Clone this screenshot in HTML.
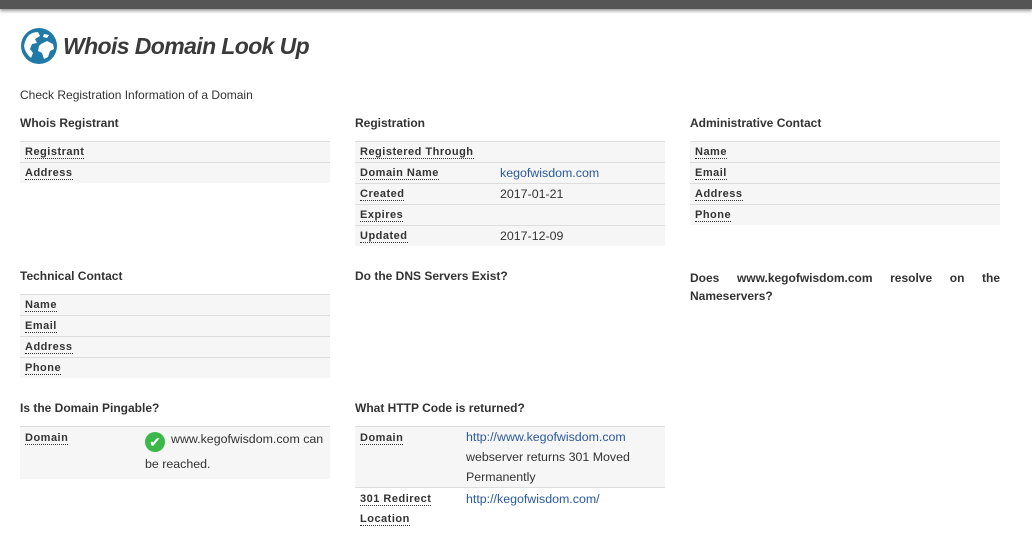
<!DOCTYPE html>
<html><head><meta charset="utf-8"><style>
body{margin:0;width:1032px;height:545px;background:#fff;font-family:"Liberation Sans",Arial,sans-serif;color:#333;position:relative;overflow:hidden}
.top{position:absolute;left:0;top:0;width:1032px;height:9px;background:#555;box-shadow:0 2px 3px rgba(0,0,0,.4)}
.title{position:absolute;left:63px;top:33px;font-size:23px;font-weight:bold;font-style:italic;color:#3a3a3a;letter-spacing:-0.6px}
.logo{position:absolute;left:20px;top:27px}
.sub{position:absolute;left:20px;top:88px;font-size:12px;color:#333}
.col{position:absolute;width:310px}
h3{margin:0;font-size:12px;font-weight:bold;color:#333;height:20px}
table{border-collapse:collapse;width:310px;margin-top:0}
td{border-top:1px solid #ddd;background:#f6f6f6;height:20px;padding:0 5px;font-size:12.4px;vertical-align:top;line-height:20px}
td.l{font-weight:bold;font-size:11px;letter-spacing:.5px;width:130px}
td.l span{border-bottom:1px dotted #333}
a{color:#2a5a9a;text-decoration:none}
</style></head><body>
<div class="top"></div>
<svg class="logo" width="38" height="38" viewBox="0 0 38 38"><circle cx="19" cy="19" r="18" fill="#1f7aa8"/><path d="M8 9 Q12 5 18 5 L20 9 L15 12 L17 16 L12 17 L10 22 L13 26 L11 31 Q5 26 4 19 Q5 13 8 9Z M21 17 L27 14 L33 17 L34 22 L30 24 L28 30 L24 32 L22 26 L18 24 L19 19Z M24 7 L29 8 L27 11 L23 10Z" fill="#fff"/></svg>
<div class="title">Whois Domain Look Up</div>
<div class="sub">Check Registration Information of a Domain</div>

<div class="col" style="left:20px;top:116px"><h3>Whois Registrant</h3>
<table style="margin-top:5px"><tr><td class="l"><span>Registrant</span></td><td></td></tr><tr><td class="l"><span>Address</span></td><td></td></tr></table></div>

<div class="col" style="left:355px;top:116px"><h3>Registration</h3>
<table style="margin-top:5px"><tr><td class="l"><span>Registered Through</span></td><td></td></tr>
<tr><td class="l"><span>Domain Name</span></td><td><a>kegofwisdom.com</a></td></tr>
<tr><td class="l"><span>Created</span></td><td>2017-01-21</td></tr>
<tr><td class="l"><span>Expires</span></td><td></td></tr>
<tr><td class="l"><span>Updated</span></td><td>2017-12-09</td></tr></table></div>

<div class="col" style="left:690px;top:116px"><h3>Administrative Contact</h3>
<table style="margin-top:5px"><tr><td class="l"><span>Name</span></td><td></td></tr><tr><td class="l"><span>Email</span></td><td></td></tr><tr><td class="l"><span>Address</span></td><td></td></tr><tr><td class="l"><span>Phone</span></td><td></td></tr></table></div>

<div class="col" style="left:20px;top:269px"><h3>Technical Contact</h3>
<table style="margin-top:5px"><tr><td class="l"><span>Name</span></td><td></td></tr><tr><td class="l"><span>Email</span></td><td></td></tr><tr><td class="l"><span>Address</span></td><td></td></tr><tr><td class="l"><span>Phone</span></td><td></td></tr></table></div>

<div class="col" style="left:355px;top:269px"><h3>Do the DNS Servers Exist?</h3></div>
<div class="col" style="left:690px;top:269px"><h3 style="text-align:justify;text-align-last:left;line-height:18px;height:auto">Does www.kegofwisdom.com resolve on the Nameservers?</h3></div>

<div class="col" style="left:20px;top:401px"><h3>Is the Domain Pingable?</h3>
<table style="margin-top:5px"><tr><td class="l" style="width:115px;padding-top:1px"><span>Domain</span></td><td style="padding:0 5px 3px 0;line-height:24px"><span style="display:inline-block;width:20px;height:20px;border-radius:50%;background:#3cb84a;color:#fff;text-align:center;line-height:20px;font-size:14px;vertical-align:-4px;margin-right:6px">✔</span>www.kegofwisdom.com can be reached.</td></tr></table></div>

<div class="col" style="left:355px;top:401px"><h3>What HTTP Code is returned?</h3>
<table style="margin-top:5px"><tr><td class="l" style="width:96px;padding-top:1px"><span>Domain</span></td><td style="padding:0 5px 0 5px">
<a>http://www.kegofwisdom.com</a> webserver returns 301 Moved Permanently</td></tr>
<tr><td class="l" style="width:96px;background:#fff;padding-top:1px"><span>301 Redirect</span><br><span>Location</span></td><td style="background:#fff;padding-top:1px"><a>http://kegofwisdom.com/</a></td></tr></table></div>
</body></html>
